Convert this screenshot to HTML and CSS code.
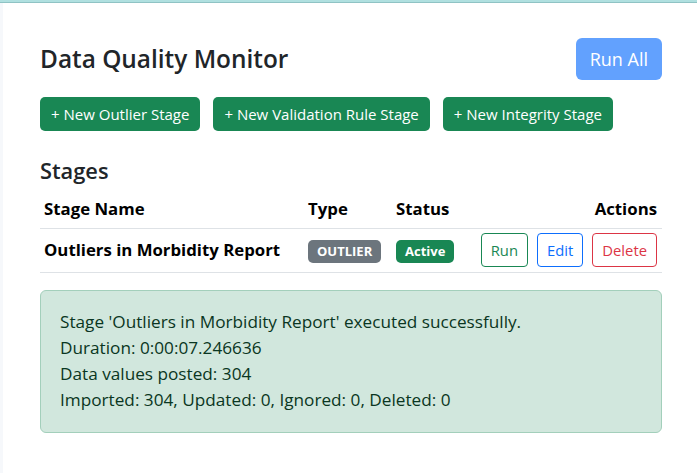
FILE: index.html
```html
<!DOCTYPE html>
<html lang="en">
<head>
<meta charset="utf-8">
<title>Data Quality Monitor</title>
<link rel="stylesheet" href="styles.css">
</head>
<body>
<div class="topline"></div>
<div class="shell">
  <aside class="rail"></aside>
  <main class="main">
    <div class="head-row">
      <h1 class="title">Data Quality Monitor</h1>
      <button class="btn btn-run-all" disabled>Run All</button>
    </div>
    <div class="new-row">
      <button class="btn btn-new">+ New Outlier Stage</button>
      <button class="btn btn-new">+ New Validation Rule Stage</button>
      <button class="btn btn-new">+ New Integrity Stage</button>
    </div>
    <h2 class="section">Stages</h2>
    <table class="stages">
      <colgroup>
        <col class="c-name">
        <col class="c-type">
        <col class="c-status">
        <col class="c-actions">
      </colgroup>
      <thead>
        <tr>
          <th>Stage Name</th>
          <th>Type</th>
          <th>Status</th>
          <th class="right">Actions</th>
        </tr>
      </thead>
      <tbody>
        <tr>
          <td class="name">Outliers in Morbidity Report</td>
          <td><span class="badge badge-gray">OUTLIER</span></td>
          <td><span class="badge badge-green">Active</span></td>
          <td class="right">
            <div class="actions">
              <button class="btn btn-sm btn-o-green">Run</button>
              <button class="btn btn-sm btn-o-blue">Edit</button>
              <button class="btn btn-sm btn-o-red">Delete</button>
            </div>
          </td>
        </tr>
      </tbody>
    </table>
    <div class="alert">
      <div>Stage 'Outliers in Morbidity Report' executed successfully.</div>
      <div>Duration: 0:00:07.246636</div>
      <div>Data values posted: 304</div>
      <div>Imported: 304, Updated: 0, Ignored: 0, Deleted: 0</div>
    </div>
  </main>
</div>
</body>
</html>
```

FILE: styles.css
```css
* { box-sizing: border-box; }

html, body {
  margin: 0;
  padding: 0;
  background: #ffffff;
  font-family: "Open Sans", "Noto Sans", "Liberation Sans", sans-serif;
  color: #212529;
  font-size: 16px;
  line-height: 1.5;
}

.topline {
  height: 3px;
  background: #b0e0e0;
  border-bottom: 1px solid #8fc3c4;
}

.shell {
  display: flex;
  min-height: 470px;
}

.rail {
  width: 3px;
  background: #f6f8fb;
}

.main {
  flex: 1;
  padding: 35px 35px 0 37px;
}

.head-row {
  display: flex;
  align-items: center;
  justify-content: space-between;
  margin-bottom: 17px;
}

.title {
  margin: 0;
  font-size: 24.4px;
  font-weight: 600;
  line-height: 1.2;
  color: #212529;
}

.btn {
  font-family: inherit;
  border: 1px solid transparent;
  border-radius: 6px;
  cursor: pointer;
  background: none;
  white-space: nowrap;
}

.btn-run-all {
  background: #62a1fe;
  color: #ffffff;
  font-size: 18px;
  line-height: 26px;
  padding: 7px 13px;
  height: 42px;
}

.new-row {
  display: flex;
  gap: 13px;
}

.btn-new {
  background: #198754;
  color: #ffffff;
  font-size: 15px;
  line-height: 22px;
  padding: 5px 10px;
  height: 34px;
  border-radius: 5px;
}

.section {
  margin: 27px 0 4px;
  font-size: 21.8px;
  font-weight: 600;
  line-height: 1.2;
}

.stages {
  width: 100%;
  border-collapse: collapse;
  table-layout: fixed;
  margin-bottom: 17px;
  color: #000000;
  font-size: 16.8px;
}

.c-name { width: 264px; }
.c-type { width: 88px; }
.c-status { width: 88px; }

.stages th {
  text-align: left;
  font-weight: 700;
  padding: 9px 4px 7px;
  border-bottom: 1px solid #dee2e6;
  line-height: 24px;
}

.stages td {
  padding: 4px 4px 5px;
  border-bottom: 1px solid #dee2e6;
  vertical-align: middle;
  line-height: 24px;
}

.stages .right { text-align: right; padding-right: 5px; }

.name { font-weight: 700; }

.badge {
  display: inline-block;
  font-size: 13px;
  font-weight: 700;
  line-height: 1;
  padding: 5px 9px 5px;
  border-radius: 5px;
  color: #ffffff;
  vertical-align: middle;
}

.badge-gray { background: #6c757d; }
.badge-green { background: #198754; }

.actions {
  display: flex;
  justify-content: flex-end;
  gap: 9px;
}

.btn-sm {
  font-size: 14.8px;
  line-height: 21px;
  padding: 5px 9px;
  height: 34px;
  background: #ffffff;
  border-radius: 4px;
}

.btn-o-green { border-color: #198754; color: #198754; }
.btn-o-blue { border-color: #0d6efd; color: #0d6efd; }
.btn-o-red { border-color: #dc3545; color: #dc3545; }

.alert {
  background: #d1e7dd;
  border: 1px solid #a3cfbb;
  border-radius: 6px;
  color: #0a3622;
  padding: 18px 19px 19px;
  line-height: 26px;
  font-size: 17.2px;
}
```
